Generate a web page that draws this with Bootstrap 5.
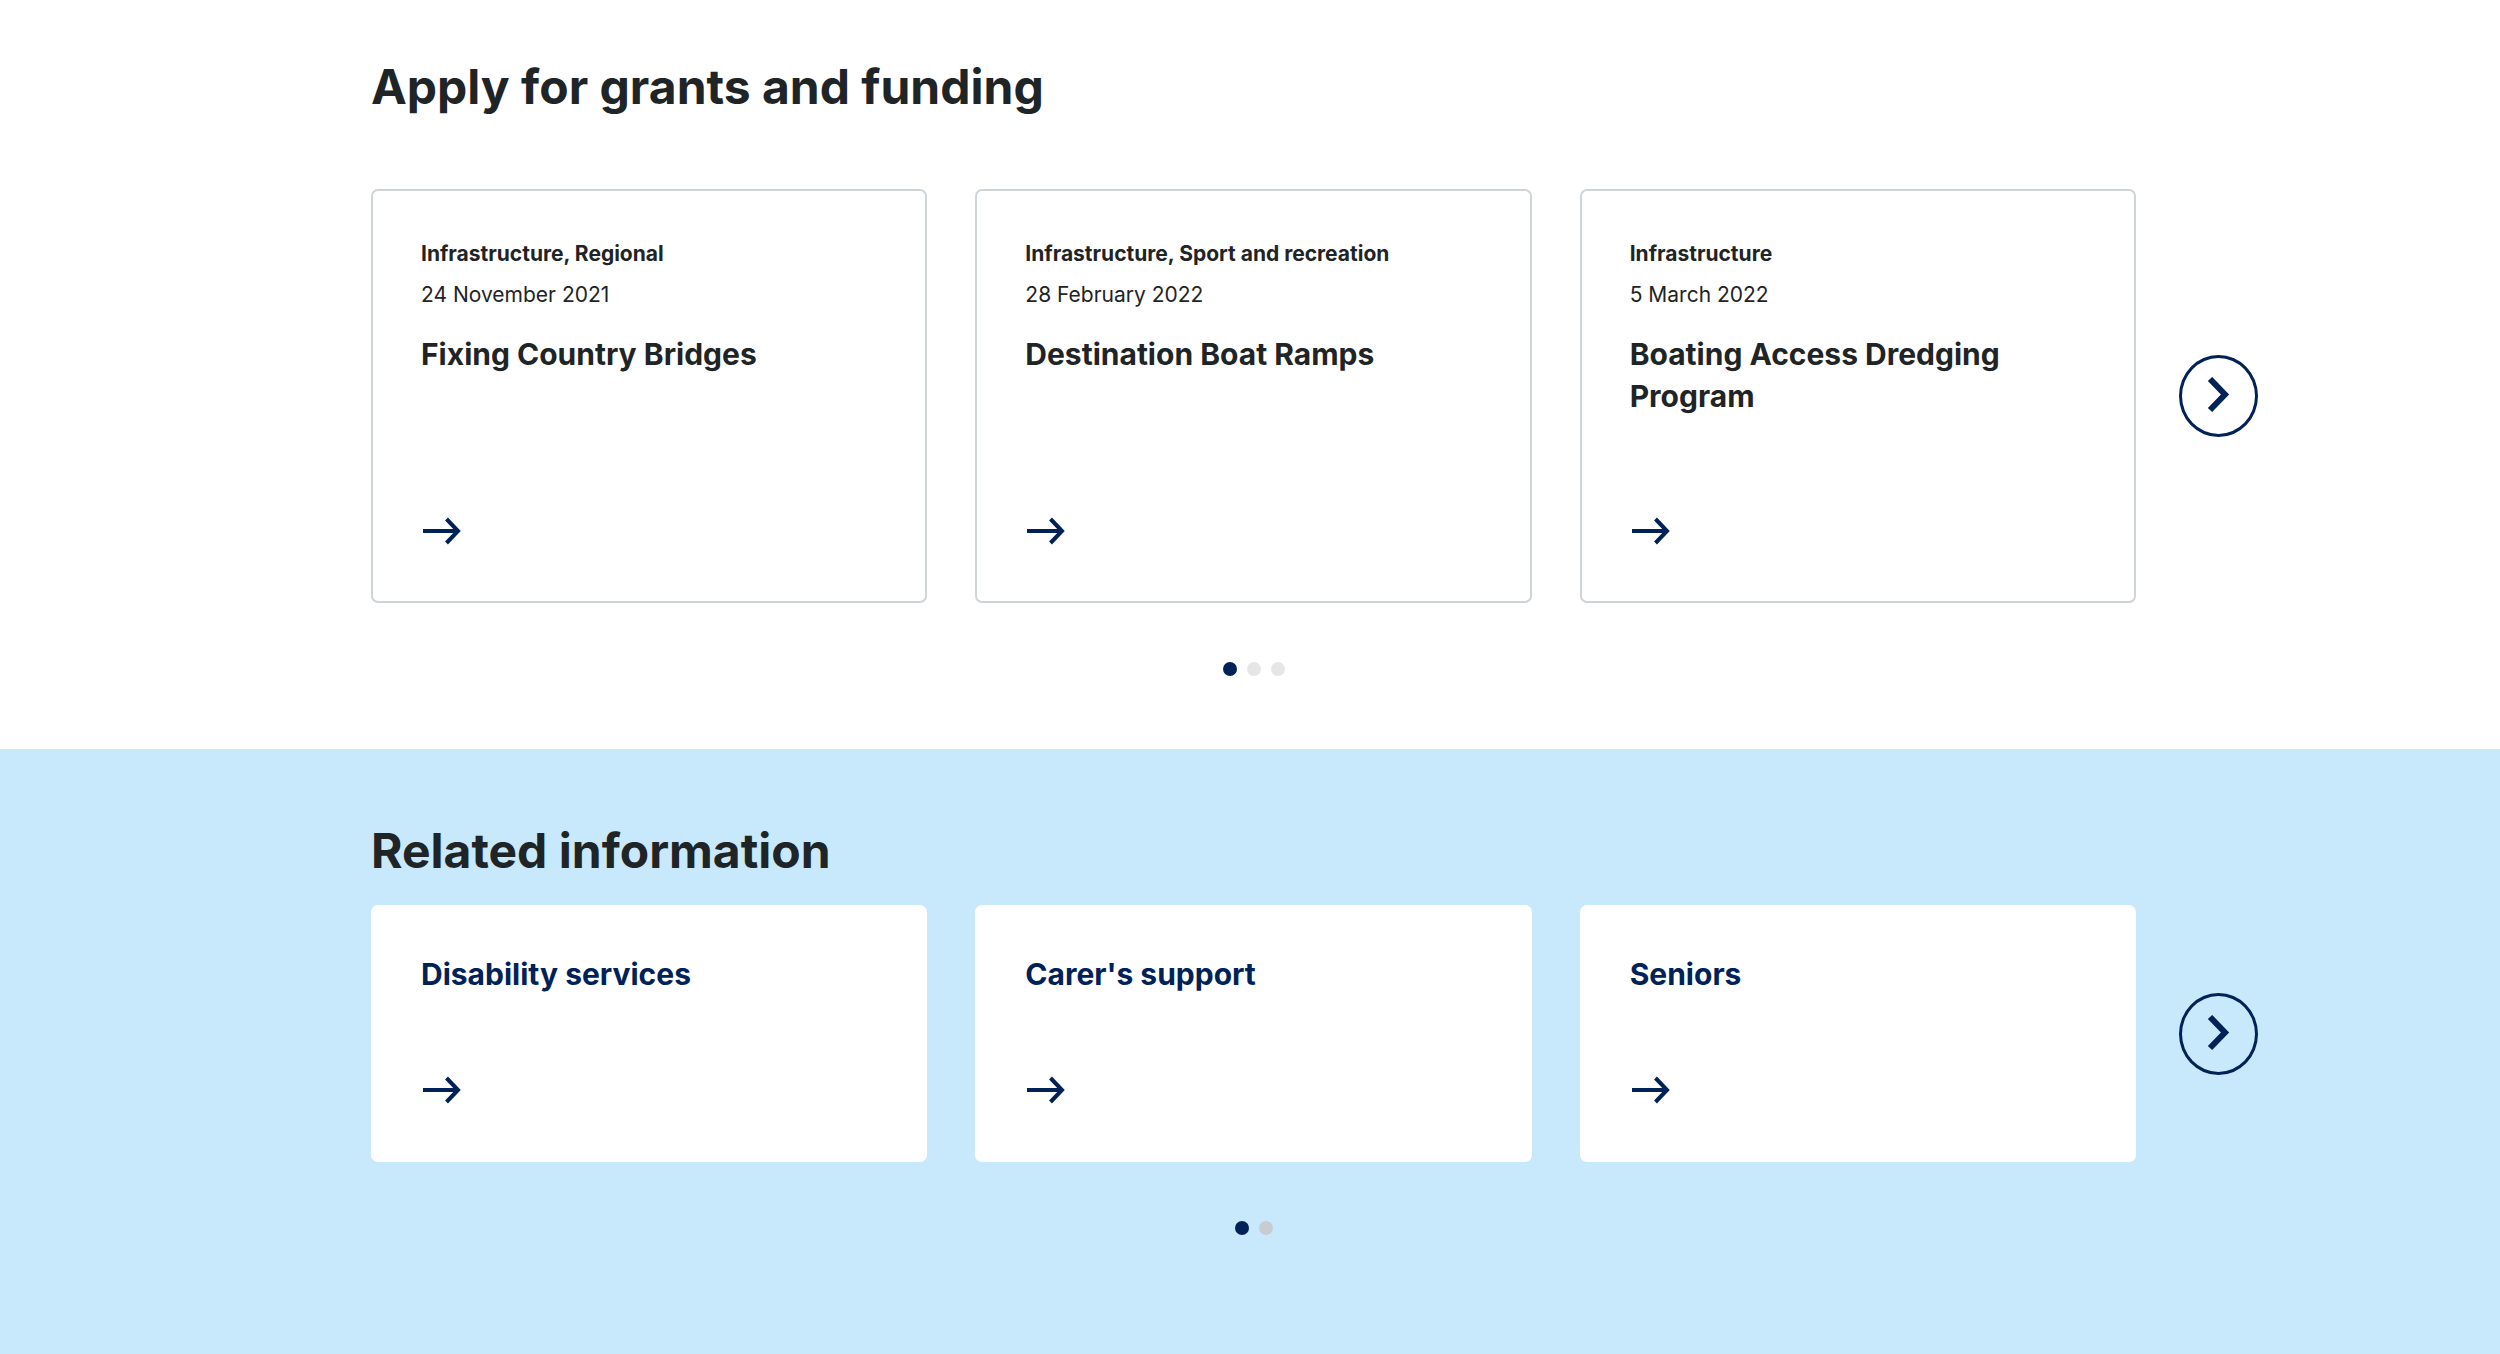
<!DOCTYPE html>
<html lang="en">
<head>
<meta charset="utf-8">
<meta name="viewport" content="width=device-width, initial-scale=1">
<title>Grants and related information</title>
<link rel="stylesheet" href="https://cdn.jsdelivr.net/npm/bootstrap@5.3.0/dist/css/bootstrap.min.css">
<style>
:root { --navy: #002257; --ink: #1f2426; --sky: #c8e9fc; }
body { font-family: Inter, "Liberation Sans", sans-serif; color: var(--ink); background: var(--sky); }
.band { padding-left: 7px; }
.band-grants { padding-top: 57px; padding-bottom: 73px; }
.band-related { padding-top: 72px; background: var(--sky); }
.wrap { max-width: 1813px; padding: 0 24px; }
.band-title { font-size: 48px; line-height: 60px; font-weight: 650; margin: 0; }
.band-grants .band-title { margin-bottom: 72px; }
.band-related .band-title { margin-bottom: 24px; }
.slides { --bs-gutter-x: 48px; }
.tile { padding: 48px; border: 2px solid #cfd4d8; border-radius: 7px; color: var(--ink); }
.tile-grant { min-height: 414px; }
.tile-link { min-height: 257px; padding-top: 46px; border-color: #fff; color: var(--navy); }
.tile-tag, .tile-date { font-size: 21px; line-height: 28px; margin: 0; }
.tile-tag { font-weight: 700; margin-top: 1px; margin-bottom: 13px; }
.tile-date { margin-bottom: 24px; }
.tile-title { font-size: 30px; line-height: 42px; font-weight: 650; margin: 0; }
.arrow { display: block; width: 42px; height: 28px; margin-bottom: 8px; color: var(--navy); }
.next { left: calc(100% + 19px); width: 79px; height: 82px; border: 3px solid var(--navy); color: var(--navy); background: transparent; }
.dots { gap: 10px; margin-top: 59px; }
.pip { width: 14px; height: 14px; background: #e6e6e6; }
.band-related .pip { background: #c8cbd0; }
.dots .pip.active { background: var(--navy); }
</style>
<script src="https://cdn.jsdelivr.net/npm/bootstrap@5.3.0/dist/js/bootstrap.bundle.min.js"></script>
</head>
<body>
<svg class="d-none" aria-hidden="true">
  <symbol id="arrow" viewBox="0 0 42 28"><path d="M2 14H37M25.500 2 37 14 25.500 26" fill="none" stroke="currentColor" stroke-width="4"/></symbol>
  <symbol id="chevron" viewBox="0 0 24 38"><path d="M3 2 18 17.500 3 33" fill="none" stroke="currentColor" stroke-width="6"/></symbol>
</svg>

<section class="band band-grants bg-white">
  <div class="wrap container-fluid">
    <h2 class="band-title">Apply for grants and funding</h2>
    <div class="position-relative">
      <div class="row slides">
        <div class="col-12 col-md-4"><a href="#" class="tile tile-grant d-flex flex-column h-100 text-decoration-none bg-white">
          <p class="tile-tag">Infrastructure, Regional</p><p class="tile-date">24 November 2021</p>
          <h3 class="tile-title">Fixing Country Bridges</h3>
          <div class="mt-auto"><svg class="arrow"><use href="#arrow"/></svg></div></a></div>
        <div class="col-12 col-md-4"><a href="#" class="tile tile-grant d-flex flex-column h-100 text-decoration-none bg-white">
          <p class="tile-tag">Infrastructure, Sport and recreation</p><p class="tile-date">28 February 2022</p>
          <h3 class="tile-title">Destination Boat Ramps</h3>
          <div class="mt-auto"><svg class="arrow"><use href="#arrow"/></svg></div></a></div>
        <div class="col-12 col-md-4"><a href="#" class="tile tile-grant d-flex flex-column h-100 text-decoration-none bg-white">
          <p class="tile-tag">Infrastructure</p><p class="tile-date">5 March 2022</p>
          <h3 class="tile-title">Boating Access Dredging Program</h3>
          <div class="mt-auto"><svg class="arrow"><use href="#arrow"/></svg></div></a></div>
      </div>
      <button type="button" class="next position-absolute top-50 translate-middle-y ms-4 p-0 rounded-circle d-flex align-items-center justify-content-center" aria-label="Next grants"><svg width="24" height="38"><use href="#chevron"/></svg></button>
    </div>
    <div class="dots d-flex justify-content-center">
      <button type="button" class="pip active rounded-circle border-0 p-0" aria-label="Page 1"></button>
      <button type="button" class="pip rounded-circle border-0 p-0" aria-label="Page 2"></button>
      <button type="button" class="pip rounded-circle border-0 p-0" aria-label="Page 3"></button>
    </div>
  </div>
</section>

<section class="band band-related">
  <div class="wrap container-fluid">
    <h2 class="band-title">Related information</h2>
    <div class="position-relative">
      <div class="row slides">
        <div class="col-12 col-md-4"><a href="#" class="tile tile-link d-flex flex-column h-100 text-decoration-none bg-white">
          <h3 class="tile-title">Disability services</h3>
          <div class="mt-auto"><svg class="arrow"><use href="#arrow"/></svg></div></a></div>
        <div class="col-12 col-md-4"><a href="#" class="tile tile-link d-flex flex-column h-100 text-decoration-none bg-white">
          <h3 class="tile-title">Carer's support</h3>
          <div class="mt-auto"><svg class="arrow"><use href="#arrow"/></svg></div></a></div>
        <div class="col-12 col-md-4"><a href="#" class="tile tile-link d-flex flex-column h-100 text-decoration-none bg-white">
          <h3 class="tile-title">Seniors</h3>
          <div class="mt-auto"><svg class="arrow"><use href="#arrow"/></svg></div></a></div>
      </div>
      <button type="button" class="next position-absolute top-50 translate-middle-y ms-4 p-0 rounded-circle d-flex align-items-center justify-content-center" aria-label="Next related information"><svg width="24" height="38"><use href="#chevron"/></svg></button>
    </div>
    <div class="dots d-flex justify-content-center">
      <button type="button" class="pip active rounded-circle border-0 p-0" aria-label="Page 1"></button>
      <button type="button" class="pip rounded-circle border-0 p-0" aria-label="Page 2"></button>
    </div>
  </div>
</section>
</body>
</html>
